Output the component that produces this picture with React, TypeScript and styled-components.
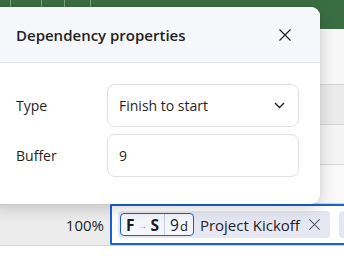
import React from "react";
import styled, { createGlobalStyle } from "styled-components";

const GlobalStyle = createGlobalStyle`
  html, body {
    margin: 0;
    padding: 0;
    width: 344px;
    height: 263px;
    overflow: hidden;
    background: #ffffff;
    font-family: "Open Sans", "Noto Sans", Arial, sans-serif;
    color: #1f1f1f;
  }
`;

const Sheet = styled.div`
  position: relative;
  width: 344px;
  height: 263px;
  display: flex;
  flex-direction: column;
  overflow: hidden;
`;

const Ribbon = styled.div`
  height: 29px;
  flex-shrink: 0;
  background: #3b6d43;
  display: flex;
  padding-left: 10px;
`;

const RibbonTick = styled.div<{ $w: number }>`
  width: ${(p) => p.$w}px;
  height: 8px;
  border-left: 1px solid rgba(255, 255, 255, 0.35);
`;

const GridRow = styled.div<{ $h: number; $bg: string }>`
  height: ${(p) => p.$h}px;
  flex-shrink: 0;
  background: ${(p) => p.$bg};
  border-bottom: 1px solid #d6d6d6;
  box-sizing: border-box;
`;

const EditRow = styled.div`
  height: 41px;
  flex-shrink: 0;
  display: flex;
  background: #ececec;
  border-bottom: 1px solid #d4d4d4;
`;

const ZoomCell = styled.div`
  width: 110px;
  flex-shrink: 0;
  display: flex;
  align-items: center;
  justify-content: flex-end;
  padding-right: 6px;
  box-sizing: border-box;
  font-size: 15px;
  color: #1f1f1f;
`;

const ActiveCell = styled.div`
  flex: 1;
  min-width: 0;
  border: 2px solid #1a62d4;
  border-right: none;
  border-radius: 2px 0 0 2px;
  background: #ffffff;
  display: flex;
  align-items: center;
  gap: 9px;
  padding-left: 6px;
  overflow: hidden;
`;

const Chip = styled.div`
  display: flex;
  align-items: center;
  height: 27px;
  padding: 0 9px 0 2px;
  background: #e5e8f2;
  border-radius: 4px;
  gap: 6px;
  flex-shrink: 0;
`;

const NextChip = styled.div`
  width: 20px;
  height: 27px;
  background: #e5e8f2;
  border-radius: 4px 0 0 4px;
  flex-shrink: 0;
`;

const Badge = styled.div`
  display: flex;
  align-items: stretch;
  height: 23px;
  border: 1px solid #1a5fd0;
  border-radius: 4px;
  background: #f4f6fb;
  box-sizing: border-box;
`;

const BadgePart = styled.span<{ $bold?: boolean; $divider?: boolean }>`
  display: flex;
  align-items: center;
  padding: 0 5px;
  font-size: 15.5px;
  font-weight: ${(p) => (p.$bold ? 700 : 400)};
  color: #1b1b1b;
  border-left: ${(p) => (p.$divider ? "1px solid #c9cfdc" : "none")};
`;

const Arrow = styled.span`
  font-size: 10px;
  color: #8a8f99;
  margin: 0 3px;
  font-weight: 400;
`;

const Unit = styled.span`
  font-size: 13px;
  margin-left: 1px;
  margin-top: 2px;
`;

const ChipLabel = styled.span`
  font-size: 15px;
  color: #1f1f1f;
  white-space: nowrap;
  margin-right: 2px;
`;

const Dialog = styled.div`
  position: absolute;
  left: -12px;
  top: 7px;
  width: 332px;
  height: 197px;
  background: #ffffff;
  border-radius: 9px;
  box-shadow: 0 4px 16px rgba(0, 0, 0, 0.18), 0 0 2px rgba(0, 0, 0, 0.1);
  overflow: hidden;
  display: flex;
  flex-direction: column;
`;

const Header = styled.div`
  height: 56px;
  box-sizing: border-box;
  background: #f5f7fb;
  border-bottom: 1px solid #e2e5ec;
  display: flex;
  align-items: center;
  justify-content: space-between;
  padding: 0 27px 0 28px;
`;

const Title = styled.h2`
  margin: 0;
  font-size: 15px;
  font-weight: 600;
  color: #1f1f1f;
`;

const CloseButton = styled.button`
  border: none;
  background: none;
  padding: 0;
  width: 16px;
  height: 16px;
  display: flex;
  align-items: center;
  justify-content: center;
  cursor: pointer;
`;

const Body = styled.div`
  display: grid;
  grid-template-columns: 91px 192px;
  row-gap: 7px;
  align-items: center;
  padding: 21px 0 0 28px;
`;

const Label = styled.label`
  font-size: 14px;
  color: #1f1f1f;
`;

const Field = styled.div`
  height: 43px;
  box-sizing: border-box;
  border: 1.5px solid #e1e1e1;
  border-radius: 8px;
  display: flex;
  align-items: center;
  justify-content: space-between;
  padding: 0 13px 0 11px;
  font-size: 14px;
  color: #1f1f1f;
`;

const CloseIcon = ({ size, color }: { size: number; color: string }) => (
  <svg width={size} height={size} viewBox="0 0 16 16">
    <path d="M2 2 L14 14 M14 2 L2 14" stroke={color} strokeWidth="1.3" strokeLinecap="round" />
  </svg>
);

const App: React.FC = () => {
  return (
    <>
      <GlobalStyle />
      <Sheet>
        <Ribbon>
          <RibbonTick $w={30} />
          <RibbonTick $w={22} />
          <RibbonTick $w={25} />
          <RibbonTick $w={30} />
        </Ribbon>
        <GridRow $h={56} $bg="#f7f7f7" />
        <GridRow $h={40} $bg="#ebebeb" />
        <GridRow $h={40} $bg="#f4f4f4" />
        <GridRow $h={39} $bg="#f9f9f9" />
        <EditRow>
          <ZoomCell>100%</ZoomCell>
          <ActiveCell>
            <Chip>
              <Badge>
                <BadgePart $bold>
                  F<Arrow>→</Arrow>S
                </BadgePart>
                <BadgePart $divider>
                  9<Unit>d</Unit>
                </BadgePart>
              </Badge>
              <ChipLabel>Project Kickoff</ChipLabel>
              <CloseIcon size={13} color="#555a63" />
            </Chip>
            <NextChip />
          </ActiveCell>
        </EditRow>

        <Dialog>
          <Header>
            <Title>Dependency properties</Title>
            <CloseButton aria-label="Close">
              <CloseIcon size={14} color="#1f1f1f" />
            </CloseButton>
          </Header>
          <Body>
            <Label>Type</Label>
            <Field>
              Finish to start
              <svg width="11" height="7" viewBox="0 0 11 7">
                <path d="M1 1 L5.5 5.5 L10 1" fill="none" stroke="#1f1f1f" strokeWidth="1.3" />
              </svg>
            </Field>
            <Label>Buffer</Label>
            <Field>9</Field>
          </Body>
        </Dialog>
      </Sheet>
    </>
  );
};

export default App;
